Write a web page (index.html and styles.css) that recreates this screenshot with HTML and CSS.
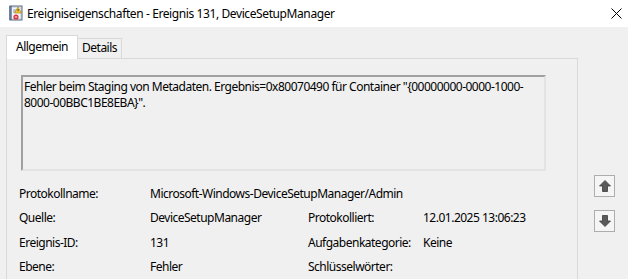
FILE: index.html
```html
<!DOCTYPE html>
<html lang="de">
<head>
    <meta charset="UTF-8">
    <title>Ereigniseigenschaften</title>
    <link rel="stylesheet" href="styles.css">
</head>
<body>

    <div class="window">
        <!-- Title bar -->
        <div class="titlebar">
            <svg class="app-icon" width="16" height="16" viewBox="0 0 16 16">
                <rect x="3" y="1" width="12" height="14" fill="#d8dde6" stroke="#5a6a86" stroke-width="1"/>
                <rect x="5" y="3" width="8" height="10" fill="#f4f6f9"/>
                <line x1="6" y1="5" x2="9" y2="5" stroke="#8a96aa"/>
                <line x1="6" y1="7" x2="9" y2="7" stroke="#8a96aa"/>
                <path d="M2 2h3M2 4h3M2 6h3M2 8h3M2 10h3M2 12h3M2 14h3" stroke="#3a4c78" stroke-width="1"/>
                <path d="M11 2 L14.5 8 L7.5 8 Z" fill="#f7c928" stroke="#a07a10" stroke-width="0.6"/>
                <rect x="10.6" y="4" width="0.9" height="2.2" fill="#333"/>
                <circle cx="9" cy="12" r="2.6" fill="#d8323a"/>
                <rect x="7.8" y="11.5" width="2.4" height="1" fill="#fff"/>
            </svg>
            <span class="title">Ereigniseigenschaften - Ereignis 131, DeviceSetupManager</span>
            <svg class="close" width="11" height="11" viewBox="0 0 11 11">
                <path d="M0.5 0.5 L10.5 10.5 M10.5 0.5 L0.5 10.5" stroke="#000" stroke-width="1"/>
            </svg>
        </div>

        <div class="content">
            <div class="main">
                <!-- Tabs -->
                <div class="tabs">
                    <div class="tab active">Allgemein</div>
                    <div class="tab">Details</div>
                </div>

                <div class="panel">
                    <div class="description">Fehler beim Staging von Metadaten. Ergebnis=0x80070490 für Container "{00000000-0000-1000-<br>8000-00BBC1BE8EBA}".</div>

                    <div class="props">
                        <span>Protokollname:</span>
                        <span class="wide">Microsoft-Windows-DeviceSetupManager/Admin</span>

                        <span>Quelle:</span>
                        <span>DeviceSetupManager</span>
                        <span>Protokolliert:</span>
                        <span>12.01.2025 13:06:23</span>

                        <span>Ereignis-ID:</span>
                        <span>131</span>
                        <span>Aufgabenkategorie:</span>
                        <span>Keine</span>

                        <span>Ebene:</span>
                        <span>Fehler</span>
                        <span>Schlüsselwörter:</span>
                        <span></span>
                    </div>
                </div>
            </div>

            <!-- Navigation buttons -->
            <div class="side">
                <button class="nav-btn" title="Vorheriges Ereignis">
                    <svg width="12" height="12" viewBox="0 0 12 12">
                        <path d="M6 0.5 L11.5 6 L8.5 6 L8.5 11.5 L3.5 11.5 L3.5 6 L0.5 6 Z" fill="#5a5a5a" stroke="#3c3c3c" stroke-width="0.8"/>
                    </svg>
                </button>
                <button class="nav-btn" title="Nächstes Ereignis">
                    <svg width="12" height="12" viewBox="0 0 12 12">
                        <path d="M6 11.5 L11.5 6 L8.5 6 L8.5 0.5 L3.5 0.5 L3.5 6 L0.5 6 Z" fill="#5a5a5a" stroke="#3c3c3c" stroke-width="0.8"/>
                    </svg>
                </button>
            </div>
        </div>
    </div>

</body>
</html>
```

FILE: styles.css
```css
/* Basic Reset */
* {
    margin: 0;
    padding: 0;
    box-sizing: border-box;
}

body {
    font-family: 'Noto Sans', 'Liberation Sans', sans-serif;
    font-size: 12px;
    letter-spacing: -0.5px;
    color: #000;
    background-color: #f0f0f0;
    width: 628px;
    height: 279px;
    overflow: hidden;
}

.window {
    display: flex;
    flex-direction: column;
    height: 100%;
}

/* Title bar */
.titlebar {
    height: 28px;
    background: #fff;
    display: flex;
    align-items: center;
    padding-left: 7px;
}

.app-icon {
    margin-right: 4px;
    margin-top: -2px;
}

.title {
    font-size: 12px;
    letter-spacing: -0.4px;
    flex: 1;
}

.close {
    margin-right: 6px;
    margin-top: -1px;
}

/* Content */
.content {
    flex: 1;
    display: flex;
    padding-left: 6px;
    padding-top: 7px;
}

.main {
    width: 572px;
    display: flex;
    flex-direction: column;
}

.tabs {
    display: flex;
    align-items: flex-end;
    height: 24px;
}

.tab {
    border: 1px solid #d9d9d9;
    border-bottom: none;
    padding: 0 4px 0 4px;
    height: 20px;
    line-height: 18px;
    background: #f0f0f0;
}

.tab.active {
    background: #fff;
    height: 24px;
    line-height: 22px;
    padding: 0 9px 0 9px;
    margin-bottom: -1px;
    position: relative;
    z-index: 1;
}

.tab + .tab {
    border-left: none;
}

.panel {
    flex: 1;
    border: 1px solid #d9d9d9;
    border-bottom: none;
    padding: 16px 0 0 14px;
}

.description {
    width: 525px;
    height: 96px;
    border-top: 2px solid #a0a0a0;
    border-left: 2px solid #a0a0a0;
    border-right: 2px solid #e3e3e3;
    border-bottom: 2px solid #e3e3e3;
    padding: 2px 0 0 1px;
    line-height: 16px;
    white-space: nowrap;
    background: #f0f0f0;
}

.props {
    display: grid;
    grid-template-columns: 131px 158px 115px 1fr;
    grid-auto-rows: 24.5px;
    align-items: center;
    margin-top: 10px;
    margin-left: -2px;
}

.props .wide {
    grid-column: 2 / span 3;
}

/* Side buttons */
.side {
    flex: 1;
    display: flex;
    flex-direction: column;
    align-items: center;
    padding-top: 141px;
    padding-left: 3px;
    gap: 13px;
}

.nav-btn {
    width: 21px;
    height: 22px;
    border: 1px solid #adadad;
    background: #f5f5f5;
    display: flex;
    align-items: center;
    justify-content: center;
}
```
